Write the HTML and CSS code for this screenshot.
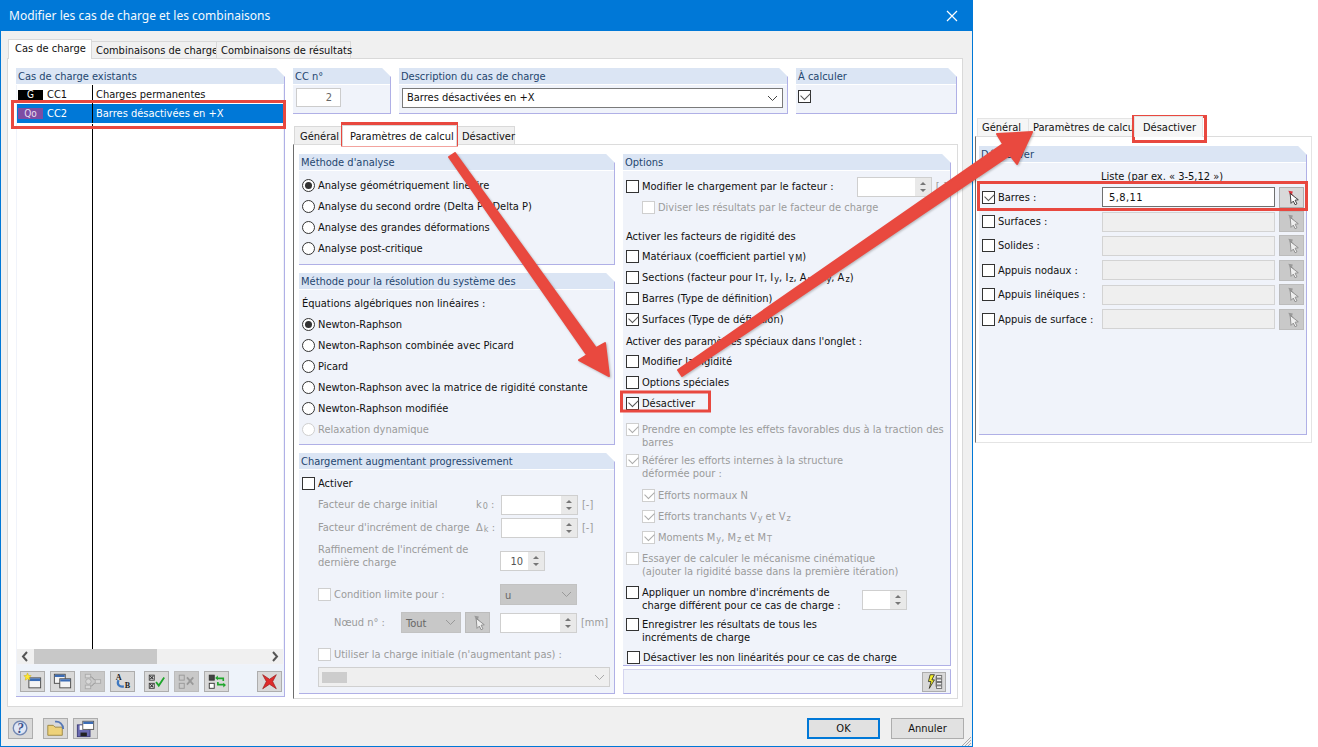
FILE: index.html
```html
<!DOCTYPE html>
<html lang="fr">
<head>
<meta charset="utf-8">
<title>Modifier les cas de charge et les combinaisons</title>
<link rel="stylesheet" href="styles.css">
</head>
<body>
<svg class="defs" width="0" height="0">
  <symbol id="pin" viewBox="0 0 25 21">
    <path d="M9 3l5 1-1 3 2 1-3 2z" fill="currentColor"/>
    <path d="M11 6l1 11 2.500-2.500 2 4 2-1-2-4 3.500-.5z" fill="#fff" stroke="#333" stroke-width="1"/>
  </symbol>
  <symbol id="pin-off" viewBox="0 0 25 21">
    <path d="M9 3l5 1-1 3 2 1-3 2z" fill="#999"/>
    <path d="M11 6l1 11 2.500-2.500 2 4 2-1-2-4 3.500-.5z" fill="#eee" stroke="#888" stroke-width="1"/>
  </symbol>
</svg>

<main class="win">
  <header class="title">
    <span>Modifier les cas de charge et les combinaisons</span>
    <svg class="close" width="12" height="12" viewBox="0 0 12 12"><path d="M1 1l10 10M11 1L1 11" stroke="#fff" stroke-width="1.200"/></svg>
  </header>

  <div class="client">
    <nav class="tabs outer-tabs">
      <span class="tab on">Cas de charge</span>
      <span class="tab">Combinaisons de charge</span>
      <span class="tab">Combinaisons de résultats</span>
    </nav>

    <section class="page">
      <aside class="group existing">
        <h2 class="gh">Cas de charge existants</h2>
        <div class="list">
          <div class="li"><span class="c1"><b class="chip g">G</b>CC1</span><span class="c2">Charges permanentes</span></div>
          <div class="li sel"><span class="c1"><b class="chip q">Qo</b>CC2</span><span class="c2">Barres désactivées en +X</span></div>
          <div class="li fill"><span class="c1"></span><span class="c2"></span></div>
        </div>
        <div class="hscroll">
          <svg width="17" height="15" viewBox="0 0 17 15"><path d="M10 3L6 7.500l4 4.500" fill="none" stroke="#555" stroke-width="2"/></svg>
          <span class="thumb"></span>
          <svg class="right" width="17" height="15" viewBox="0 0 17 15"><path d="M7 3l4 4.500L7 12" fill="none" stroke="#555" stroke-width="2"/></svg>
        </div>
        <div class="toolbar">
          <button class="tb"><svg viewBox="0 0 25 21"><rect x="8.500" y="6.500" width="13" height="11" fill="#f4f4f4" stroke="#444"/><rect x="9" y="7" width="12" height="3" fill="#3b6cb5"/><path d="M7 1l1.200 2.800L11 4l-2 2 .6 3L7 7.500 4.400 9 5 6 3 4l2.800-.2z" fill="#ffe830" stroke="#c9a800" stroke-width=".5"/></svg></button>
          <button class="tb"><svg viewBox="0 0 25 21"><rect x="3.500" y="2.500" width="12" height="10" fill="#f4f4f4" stroke="#444"/><rect x="4" y="3" width="11" height="2.500" fill="#3b6cb5"/><rect x="9.500" y="7.500" width="12" height="10" fill="#f4f4f4" stroke="#444"/><rect x="10" y="8" width="11" height="2.500" fill="#3b6cb5"/></svg></button>
          <button class="tb off"><svg viewBox="0 0 25 21"><g fill="#d8d8d8" stroke="#aaa"><rect x="4.500" y="2.500" width="6" height="4"/><rect x="4.500" y="14.500" width="6" height="4"/><rect x="15.500" y="8.500" width="6" height="4"/><circle cx="8" cy="10.500" r="3"/></g><path d="M11 5l4 4M11 16l4-4" stroke="#888"/></svg></button>
          <button class="tb"><svg viewBox="0 0 25 21"><text x="5" y="9" class="ico-t">A</text><text x="15" y="18" class="ico-t">B</text><path d="M8 9c-2 5 1 8 6 7" fill="none" stroke="#3f78c0" stroke-width="2.500"/></svg></button>
          <button class="tb"><svg viewBox="0 0 25 21"><g fill="#fff" stroke="#333"><rect x="4.500" y="3.500" width="5.500" height="5.500"/><rect x="4.500" y="12.500" width="5.500" height="5.500"/></g><path d="M5.500 4.500l3.500 3.500M9 4.500L5.500 8M5.500 13.500l3.500 3.500M9 13.500L5.500 17" stroke="#333" stroke-width="1.200"/><path d="M12 11l3 4 6-9" fill="none" stroke="#1fa62c" stroke-width="2"/></svg></button>
          <button class="tb off"><svg viewBox="0 0 25 21"><g fill="none" stroke="#999"><rect x="4.500" y="3.500" width="5.500" height="5.500"/><rect x="4.500" y="12.500" width="5.500" height="5.500"/></g><path d="M13 6l7 8M20 6l-7 8" stroke="#999" stroke-width="2"/></svg></button>
          <button class="tb"><svg viewBox="0 0 25 21"><rect x="4.500" y="3.500" width="5.500" height="5.500" fill="#444" stroke="#333"/><rect x="4.500" y="12.500" width="5.500" height="5.500" fill="#fff" stroke="#333"/><path d="M13 7h7v3M21 14h-7v-3" fill="none" stroke="#1fa62c" stroke-width="1.800"/><path d="M11 6.500l3-2.500v5zM23 14.500l-3 2.500v-5z" fill="#1fa62c"/></svg></button>
          <button class="tb last"><svg viewBox="0 0 25 21"><path d="M5 3l7.500 5L20 3l-4 7.500 4 8-7.500-5-7.500 5 4-8z" fill="#e02a2a" stroke="#9a2020" stroke-width=".8"/></svg></button>
        </div>
      </aside>

      <div class="main">
        <div class="top-row">
          <section class="group no">
            <h2 class="gh">CC n°</h2>
            <div class="field num">2</div>
          </section>
          <section class="group desc">
            <h2 class="gh">Description du cas de charge</h2>
            <div class="select strong">Barres désactivées en +X<svg class="chev" width="11" height="7" viewBox="0 0 11 7"><path d="M1 1l4.500 4.500L10 1" fill="none" stroke="#444"/></svg></div>
          </section>
          <section class="group calc">
            <h2 class="gh">À calculer</h2>
            <div class="ck solo"><i class="box on"></i></div>
          </section>
        </div>

        <nav class="tabs inner-tabs">
          <span class="tab">Général</span>
          <span class="tab on">Paramètres de calcul</span>
          <span class="tab">Désactiver</span>
        </nav>

        <div class="inner">
          <div class="col col-left">
            <section class="group g-method">
              <h2 class="gh">Méthode d'analyse</h2>
              <div class="gb p4">
                <div class="ck"><i class="radio on"></i>Analyse géométriquement linéaire</div>
                <div class="ck"><i class="radio"></i>Analyse du second ordre (Delta P / Delta P)</div>
                <div class="ck"><i class="radio"></i>Analyse des grandes déformations</div>
                <div class="ck"><i class="radio"></i>Analyse post-critique</div>
              </div>
            </section>
            <section class="group g-solve">
              <h2 class="gh">Méthode pour la résolution du système des</h2>
              <div class="gb p3">
                <div class="ck">Équations algébriques non linéaires :</div>
                <div class="ck"><i class="radio on"></i>Newton-Raphson</div>
                <div class="ck"><i class="radio"></i>Newton-Raphson combinée avec Picard</div>
                <div class="ck"><i class="radio"></i>Picard</div>
                <div class="ck"><i class="radio"></i>Newton-Raphson avec la matrice de rigidité constante</div>
                <div class="ck"><i class="radio"></i>Newton-Raphson modifiée</div>
                <div class="ck dis"><i class="radio"></i>Relaxation dynamique</div>
              </div>
            </section>
            <section class="group g-load">
              <h2 class="gh">Chargement augmentant progressivement</h2>
              <div class="gb p3">
                <div class="ck"><i class="box"></i>Activer</div>
                <div class="ck dis ind"><span class="lab">Facteur de charge initial</span><span class="sym">k<small>0</small> :</span><span class="spin w77"><i></i><b></b></span><span class="unit">[-]</span></div>
                <div class="ck dis ind m2"><span class="lab">Facteur d'incrément de charge</span><span class="sym">Δ<small>k</small> :</span><span class="spin w77"><i></i><b></b></span><span class="unit">[-]</span></div>
                <div class="two dis ind m5"><span class="lab2">Raffinement de l'incrément de<br>dernière charge</span><span class="spin w45 low"><i>10</i><b></b></span></div>
                <div class="ck dis ind m15"><i class="box"></i><span class="lab3">Condition limite pour :</span><span class="combo w77">u<svg class="chev" width="11" height="7" viewBox="0 0 11 7"><path d="M1 1l4.500 4.500L10 1" fill="none" stroke="#999"/></svg></span></div>
                <div class="ck dis ind2 m7"><span class="lab4">Nœud n° :</span><span class="combo w60">Tout<svg class="chev" width="11" height="7" viewBox="0 0 11 7"><path d="M1 1l4.500 4.500L10 1" fill="none" stroke="#999"/></svg></span><button class="tb pinb off"><svg><use href="#pin-off"/></svg></button><span class="spin w77"><i></i><b></b></span><span class="unit">[mm]</span></div>
                <div class="ck dis ind m11"><i class="box"></i>Utiliser la charge initiale (n'augmentant pas) :</div>
                <div class="wide-sel"><span class="ph"></span><svg class="chev" width="11" height="7" viewBox="0 0 11 7"><path d="M1 1l4.500 4.500L10 1" fill="none" stroke="#aaa"/></svg></div>
              </div>
            </section>
          </div>

          <div class="col col-right">
            <section class="group g-opts">
              <h2 class="gh">Options</h2>
              <div class="gb p5">
                <div class="ck"><i class="box"></i>Modifier le chargement par le facteur :<span class="spin w77 push"><i></i><b></b></span><span class="unit dim">[-]</span></div>
                <div class="ck dis sub"><i class="box"></i>Diviser les résultats par le facteur de charge</div>
                <div class="ck h20 m8">Activer les facteurs de rigidité des</div>
                <div class="ck"><i class="box"></i><span>Matériaux (coefficient partiel <span class="sb">γ<small>M</small></span>)</span></div>
                <div class="ck"><i class="box"></i><span>Sections (facteur pour <span class="sb">I<small>T</small></span>, <span class="sb">I<small>y</small></span>, <span class="sb">I<small>z</small></span>, <span class="sb">A<small>x</small></span>, <span class="sb">A<small>y</small></span>, <span class="sb">A<small>z</small></span>)</span></div>
                <div class="ck"><i class="box"></i>Barres (Type de définition)</div>
                <div class="ck"><i class="box on"></i>Surfaces (Type de définition)</div>
                <div class="ck h19 m2">Activer des paramètres spéciaux dans l'onglet :</div>
                <div class="ck"><i class="box"></i>Modifier la rigidité</div>
                <div class="ck"><i class="box"></i>Options spéciales</div>
                <div class="ck"><i class="box on"></i>Désactiver</div>
                <div class="two dis m9"><i class="box on"></i><span>Prendre en compte les effets favorables dus à la traction des<br>barres</span></div>
                <div class="two dis m5"><i class="box on"></i><span>Référer les efforts internes à la structure<br>déformée pour :</span></div>
                <div class="ck dis sub m5"><i class="box on"></i>Efforts normaux N</div>
                <div class="ck dis sub"><i class="box on"></i><span>Efforts tranchants <span class="sb">V<small>y</small></span> et <span class="sb">V<small>z</small></span></span></div>
                <div class="ck dis sub"><i class="box on"></i><span>Moments <span class="sb">M<small>y</small></span>, <span class="sb">M<small>z</small></span> et <span class="sb">M<small>T</small></span></span></div>
                <div class="two dis m4"><i class="box"></i><span>Essayer de calculer le mécanisme cinématique<br>(ajouter la rigidité basse dans la première itération)</span></div>
                <div class="two m8"><i class="box"></i><span>Appliquer un nombre d'incréments de<br>charge différent pour ce cas de charge :</span><span class="spin w45 push mid"><i></i><b></b></span></div>
                <div class="two m6"><i class="box"></i><span>Enregistrer les résultats de tous les<br>incréments de charge</span></div>
                <div class="ck m3 nudge"><i class="box"></i>Désactiver les non linéarités pour ce cas de charge</div>
              </div>
            </section>
            <div class="group-bar">
              <button class="tb small"><svg viewBox="0 0 25 21"><path d="M8 2h5l-3 6h3l-6 10 2-8H6z" fill="#f3ee2a" stroke="#222" stroke-width=".9"/><path d="M15 4h6M15 8h6M15 12h6M15 16h6M15 4v12" stroke="#555" fill="none"/><g fill="#eee" stroke="#666"><rect x="15.500" y="3" width="6" height="3"/><rect x="15.500" y="7" width="6" height="3"/><rect x="15.500" y="11" width="6" height="3"/><rect x="15.500" y="15" width="6" height="3"/></g></svg></button>
            </div>
          </div>
        </div>
      </div>
    </section>

    <footer class="foot">
      <button class="tb big"><svg viewBox="0 0 25 21"><circle cx="12" cy="10" r="7.500" fill="#dfe6f5" stroke="#7187b3" stroke-width="1.500"/><text x="8.500" y="15" class="ico-q">?</text></svg></button>
      <button class="tb big gap"><svg viewBox="0 0 25 21"><path d="M4 7h6l2 2h8v9H4z" fill="#eed27a" stroke="#9a8540"/><path d="M12 3c5-1 9 3 9 8" fill="none" stroke="#5577b5" stroke-width="2"/></svg></button>
      <button class="tb big"><svg viewBox="0 0 25 21"><rect x="3.500" y="6.500" width="14" height="13" fill="#6a6ab0" stroke="#3c3c78"/><rect x="6" y="7" width="9" height="5" fill="#fff"/><rect x="7" y="15" width="7" height="4" fill="#222"/><rect x="9.500" y="2.500" width="12" height="9" fill="#fff" stroke="#555"/><rect x="10" y="3" width="11" height="2.500" fill="#3b6cb5"/></svg></button>
      <button class="btn default">OK</button>
      <button class="btn">Annuler</button>
    </footer>
    <svg class="grip" width="12" height="12" viewBox="0 0 12 12"><path d="M11 2L2 11M11 5l-6 6M11 8l-3 3" stroke="#aaa"/></svg>
  </div>
</main>

<aside class="side">
  <nav class="tabs side-tabs">
    <span class="tab">Général</span>
    <span class="tab">Paramètres de calcul</span>
    <span class="tab on">Désactiver</span>
  </nav>
  <div class="side-page">
    <section class="group g-off">
      <h2 class="gh">Désactiver</h2>
      <div class="list-hint">Liste (par ex. « 3-5,12 »)</div>
      <div class="off-row"><i class="box on"></i><span class="off-lab">Barres :</span><span class="input live">5,8,11</span><button class="tb"><svg class="red"><use href="#pin"/></svg></button></div>
      <div class="off-row"><i class="box"></i><span class="off-lab">Surfaces :</span><span class="input"></span><button class="tb off"><svg><use href="#pin-off"/></svg></button></div>
      <div class="off-row"><i class="box"></i><span class="off-lab">Solides :</span><span class="input"></span><button class="tb off"><svg><use href="#pin-off"/></svg></button></div>
      <div class="off-row"><i class="box"></i><span class="off-lab">Appuis nodaux :</span><span class="input"></span><button class="tb off"><svg><use href="#pin-off"/></svg></button></div>
      <div class="off-row"><i class="box"></i><span class="off-lab">Appuis linéiques :</span><span class="input"></span><button class="tb off"><svg><use href="#pin-off"/></svg></button></div>
      <div class="off-row"><i class="box"></i><span class="off-lab">Appuis de surface :</span><span class="input"></span><button class="tb off"><svg><use href="#pin-off"/></svg></button></div>
    </section>
  </div>
</aside>

<svg class="marks" width="1318" height="747" viewBox="0 0 1318 747">
  <g class="hl">
    <rect x="12.500" y="101.500" width="272" height="26"/>
    <rect x="342.500" y="123.500" width="114" height="21.500"/>
    <rect x="621.500" y="392" width="88" height="19"/>
    <rect x="1133.500" y="116.500" width="72" height="25"/>
    <rect x="978.500" y="182.500" width="328" height="27"/>
  </g>
  <g class="arrows">
    <polygon points="455,153 596,348 605,343 609,376 579,360 587,355 449,157"/>
    <polygon points="682,376 1010,155 1017,164 1032,132 997,134 1003,144 678,370"/>
  </g>
</svg>
</body>
</html>
```

FILE: styles.css
```css
* { box-sizing: border-box; }
html, body { margin: 0; padding: 0; }
body {
  width: 1318px; height: 747px; overflow: hidden; position: relative;
  display: flex; background: #fff; color: #111;
  font-family: "DejaVu Sans", sans-serif; font-stretch: condensed; font-size: 11px; line-height: 13px;
}
.defs { position: absolute; }
i { font-style: normal; }
h2 { margin: 0; font: inherit; }

.win { width: 973px; height: 747px; border: 1px solid #0078d7; border-top: 0; background: #f0f0f0; display: flex; flex-direction: column; flex: none; }
.title { height: 31px; flex: none; margin: 0 -1px; background: #0078d7; color: #f4f9fd; display: flex; align-items: center; justify-content: space-between; padding: 0 15px 0 9px; font-family: "Noto Sans", sans-serif; font-stretch: normal; font-size: 12px; }
.client { flex: 1; position: relative; padding: 7px 8px 0 6px; display: flex; flex-direction: column; }

.tabs { display: flex; align-items: flex-end; flex: none; }
.tab { height: 17px; padding: 0 4px; display: flex; align-items: center; background: #f0f0f0; border: 1px solid #d9d9d9; border-bottom: 0; margin-left: -1px; white-space: nowrap; }
.tab.on { height: 20px; background: #fff; border-bottom: 0; position: relative; padding-bottom: 3px; z-index: 1; margin-bottom: -1px; }
.outer-tabs { height: 20px; padding-left: 2px; }
.outer-tabs .tab:first-child { width: 84px; padding-left: 6px; }
.outer-tabs .tab:nth-child(2) { width: 126px; }
.outer-tabs .tab:nth-child(3) { width: 135px; }

.page { height: 649px; width: 956px; flex: none; background: #fff; border: 1px solid #d9d9d9; padding: 9px 5px 0 8px; display: flex; gap: 8px; }

.group { background: #f0f3fa; border-right: 1px solid #b0b0e6; border-bottom: 1px solid #b0b0e6; clip-path: polygon(0 0, calc(100% - 9px) 0, 100% 9px, 100% 100%, 0 100%); display: flex; flex-direction: column; }
.gh { height: 17px; flex: none; padding: 2px 2px 0 2px; background: #dbe5f4; border-bottom: 1px solid #fff; color: #24466f; white-space: nowrap; }

.existing { width: 269px; height: 629px; flex: none; }
.list { flex: 1; margin: 0 1px 0 1px; background: #fff; display: flex; flex-direction: column; }
.li { height: 19px; display: flex; align-items: center; }
.li.sel { height: 20px; background: #0078d7; color: #fff; border-bottom: 1px solid #fff; }
.li.fill { flex: 1; }
.c1 { width: 76px; height: 100%; display: flex; align-items: center; border-right: 1px solid #000; padding-left: 1px; }
.c2 { padding-left: 3px; }
.chip { width: 25px; height: 10px; margin-right: 4px; display: flex; align-items: center; justify-content: center; font-weight: normal; font-size: 10px; color: #fff; background: #000; }
.chip.q { height: 11px; background: #7d4da3; color: #e9dff0; }
.hscroll { height: 15px; margin: 0 1px; flex: none; background: #f0f0f0; display: flex; position: relative; }
.hscroll .thumb { width: 123px; background: #c8c8c8; }
.hscroll .right { margin-left: auto; }
.toolbar { height: 31px; flex: none; margin-top: 1px; padding: 6px 2px 0 4px; display: flex; gap: 5px; background: #eef3fa; }
.tb { width: 25px; height: 21px; padding: 0; flex: none; background: #d9d9d9; border: 1px solid #adadad; display: block; }
.tb svg { width: 100%; height: 100%; display: block; color: #d9343c; }
.tb.off { background: #c9c9c9; border-color: #bcbcbc; }
.tb.last { margin-left: auto; }
.toolbar .tb:nth-child(5) { margin-left: 4px; }
.ico-t { font-family: "Liberation Serif", serif; font-size: 9px; font-weight: bold; fill: #222; }
.ico-q { font-family: "Liberation Serif", serif; font-size: 15px; font-weight: bold; font-style: italic; fill: #3a4f88; }

.main { width: 665px; flex: none; display: flex; flex-direction: column; }
.top-row { display: flex; gap: 8px; height: 46px; flex: none; }
.no { width: 98px; }
.desc { width: 389px; }
.calc { width: 161px; }
.field { margin: 3px 0 0 3px; width: 45px; height: 19px; background: #fff; border: 1px solid #ccc; text-align: right; padding: 2px 8px; color: #666; }
.select { margin: 3px 0 0 3px; width: 381px; height: 20px; background: #fff; border: 1px solid #7a7a7a; padding: 2px 4px; position: relative; }
.chev { position: absolute; right: 4px; top: 6px; }
.solo { margin: 1px 0 0 2px; }

.inner-tabs { height: 20px; margin-top: 11px; padding-left: 2px; }
.inner-tabs .tab { height: 19px; padding: 0 5px; }
.inner-tabs .tab:nth-child(1) { width: 49px; }
.inner-tabs .tab.on { width: 115px; height: 21px; padding-left: 7px; }
.inner-tabs .tab:nth-child(3) { width: 59px; }
.inner { height: 555px; margin-top: -1px; border: 1px solid #dcdcdc; border-left: 1px solid #6d6d6d; padding: 9px 6px 0 5px; display: flex; gap: 8px; }
.col { display: flex; flex-direction: column; }
.col-left { width: 316px; gap: 8px; }
.col-right { width: 328px; gap: 3px; }
.g-method { height: 111px; }
.g-solve { height: 172px; }
.g-load { height: 241px; }
.g-opts { height: 512px; }
.group-bar { height: 25px; background: #f0f3fa; border: 1px solid #d5d5f0; border-right-color: #b0b0e6; border-bottom-color: #b0b0e6; display: flex; align-items: center; justify-content: flex-end; padding-right: 4px; }
.tb.small { width: 24px; height: 20px; }

.gb { padding-left: 3px; }
.p3 { padding-top: 3px; }
.p4 { padding-top: 4px; }
.p5 { padding-top: 5px; }
.ck { height: 21px; display: flex; align-items: center; white-space: nowrap; }
.two { height: 26px; display: flex; align-items: flex-start; white-space: nowrap; }
.h20 { height: 20px; }
.h19 { height: 19px; }
.m2 { margin-top: 2px; } .m3 { margin-top: 3px; } .m4 { margin-top: 4px; } .m5 { margin-top: 5px; } .m6 { margin-top: 6px; } .m7 { margin-top: 7px; } .m8 { margin-top: 8px; } .m9 { margin-top: 9px; } .m11 { margin-top: 11px; } .m15 { margin-top: 15px; }
.nudge { padding-left: 1px; }
.box, .radio { width: 13px; height: 13px; flex: none; margin-right: 3px; background: #fff; border: 1px solid #333; position: relative; display: block; }
.radio { border-radius: 50%; }
.radio.on::after { content: ""; position: absolute; left: 2px; top: 2px; width: 7px; height: 7px; border-radius: 50%; background: #333; }
.box.on::after { content: ""; position: absolute; left: 2px; top: 1px; width: 8px; height: 5px; border-left: 1px solid #555; border-bottom: 1px solid #555; transform: rotate(-45deg); }
.dis { color: #9b9b9b; }
.dis .box, .dis .radio { border-color: #cfcfcf; }
.dis .box.on::after { border-color: #aaa; }
.sub { padding-left: 16px; }
.ind { padding-left: 16px; }
.ind2 { padding-left: 32px; }
.lab { width: 158px; }
.sym { width: 25px; }
.lab2 { width: 182px; }
.lab3 { width: 166px; }
.lab4 { width: 67px; }
.sb small, .sym small { font-size: 9px; margin-left: 1px; position: relative; top: 1px; }
.spin { height: 20px; display: flex; background: #fff; border: 1px solid #cfcfcf; flex: none; position: relative; }
.spin i { flex: 1; text-align: right; padding: 3px 5px; color: #555; }
.spin b { width: 16px; background: #e9e9e9 linear-gradient(#7a7a7a, #7a7a7a) no-repeat center / 5px 0; position: relative; }
.spin b::before, .spin b::after { content: ""; position: absolute; left: 5px; border-left: 3px solid transparent; border-right: 3px solid transparent; }
.spin b::before { top: 4px; border-bottom: 3px solid #777; }
.spin b::after { bottom: 4px; border-top: 3px solid #777; }
.w77 { width: 77px; }
.w45 { width: 45px; }
.low { margin-top: 8px; }
.mid { margin-top: 4px; }
.push { margin-left: auto; }
.unit { margin-left: 4px; color: #9b9b9b; }
.dim { margin-right: 3px; }
.col-right .w77.push { width: 75px; margin-right: 0; }
.two .push { margin-right: 43px; }
.combo { height: 21px; background: #c8c8c8; border: 1px solid #c2c2c2; position: relative; padding: 4px 4px; color: #666; flex: none; }
.w60 { width: 60px; }
.pinb { margin: 0 10px 0 4px; background: #c9c9c9; }
.wide-sel { height: 20px; margin: 2px 4px 0 16px; border: 1px solid #d0d0d0; background: #efefef; position: relative; padding: 2px 3px; }
.ph { display: block; width: 25px; height: 11px; background: #cdcdcd; margin-top: 2px; }

.foot { height: 40px; flex: none; padding-top: 11px; padding-left: 1px; display: flex; gap: 5px; }
.tb.big { width: 25px; height: 21px; }
.tb.gap { margin-left: 5px; }
.btn { font: inherit; font-stretch: condensed; width: 73px; height: 21px; padding: 0; color: #111; background: #e1e1e1; border: 1px solid #adadad; margin-left: 6px; }
.btn.default { margin-left: auto; border: 2px solid #0078d7; }
.grip { position: absolute; right: 0; bottom: 0; }

.side { flex: 1; padding: 118px 6px 0 2px; display: flex; flex-direction: column; }
.side-tabs { height: 18px; padding-left: 3px; }
.side-tabs .tab { height: 18px; border-color: #e4e4e4; background: #f6f6f6; padding: 0 4px; }
.side-tabs .tab:nth-child(1) { width: 52px; }
.side-tabs .tab:nth-child(2) { width: 107px; }
.side-tabs .tab.on { width: 69px; height: 21px; padding-left: 8px; }
.side-page { height: 307px; border-top: 1px solid #dcdcdc; border-left: 1px solid #6d6d6d; padding: 9px 4px 0 3px; border-bottom: 1px solid #e4e4e4; border-right: 1px solid #e4e4e4; }
.g-off { height: 289px; }
.list-hint { margin: 7px 0 2px 122px; height: 13px; }
.off-row { height: 24.4px; padding-left: 3px; display: flex; align-items: center; flex: none; }
.off-lab { width: 104px; }
.input { width: 173px; height: 20px; background: #efefef; border: 1px solid #d3d3d3; padding: 3px 6px; letter-spacing: .4px; flex: none; }
.input.live { background: #fff; border-color: #707070; }
.off-row .tb { margin-left: 4px; }

.marks { position: absolute; left: 0; top: 0; pointer-events: none; }
.hl rect { fill: none; stroke: #e8483f; stroke-width: 3; }
.arrows polygon { fill: #e9493f; stroke: #e9493f; stroke-width: 2; stroke-linejoin: round; filter: drop-shadow(1px 1px 1px rgba(0,0,0,.25)); }
```
